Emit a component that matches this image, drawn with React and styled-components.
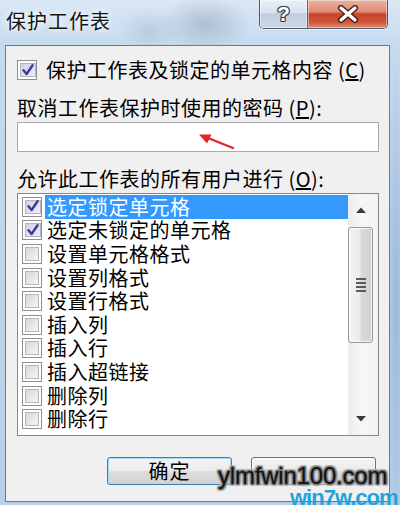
import React from 'react';
import styled, { createGlobalStyle } from 'styled-components';

const Global = createGlobalStyle`
  html, body { margin: 0; padding: 0; background: #fff; }
  body {
    width: 400px; height: 505px; overflow: hidden;
    font-family: "Noto Sans CJK SC", "Noto Sans", sans-serif;
  }
`;

const Window = styled.div`
  position: relative;
  width: 400px;
  height: 505px;
  box-sizing: border-box;
  display: flex;
  flex-direction: column;
  padding: 0 10px 3px 5px;
  overflow: hidden;
  background:
    radial-gradient(ellipse 45px 28px at 205px 24px, rgba(110,122,140,0.32), transparent),
    radial-gradient(ellipse 30px 22px at 150px 30px, rgba(110,122,140,0.18), transparent),
    radial-gradient(ellipse 10px 260px at 396px 300px, rgba(90,130,190,0.35), transparent),
    linear-gradient(180deg, #d9e7f5 0%, #c6daee 9%, #b8cfe8 100%);
`;

const TitleBar = styled.div`
  height: 45px;
  flex: none;
  display: flex;
  justify-content: space-between;
  align-items: flex-start;
`;

const Title = styled.div`
  margin: 9px 0 0 1px;
  font-size: 20px;
  line-height: 24px;
  letter-spacing: 1px;
  color: #151515;
  text-shadow: 0 0 6px #fff, 0 0 10px rgba(255,255,255,0.85);
`;

const Controls = styled.div`
  display: flex;
  margin-right: 2px;
  height: 29px;
  box-sizing: border-box;
  border: 1px solid #4d5d70;
  border-top: none;
  border-radius: 0 0 5px 5px;
  overflow: hidden;
  box-shadow: 0 1px 0 rgba(255,255,255,0.6);
`;

const CtrlButton = styled.div`
  width: ${p => p.$w}px;
  display: flex;
  align-items: center;
  justify-content: center;
  background: ${p => p.$red
    ? 'linear-gradient(180deg, #eab3a3 0%, #de8a72 42%, #c8432b 50%, #cf5339 78%, #e08c6e 100%)'
    : 'linear-gradient(180deg, #e9f0f8 0%, #d6e2ef 45%, #bfcddd 50%, #cbd8e7 100%)'};
  border-right: ${p => p.$red ? 'none' : '1px solid #56667a'};
  box-shadow: inset 0 0 0 1px rgba(255,255,255,0.45);
`;

const HelpGlyph = styled.span`
  font-family: "Liberation Sans", Arial, sans-serif;
  font-weight: bold;
  font-size: 21px;
  line-height: 1;
  color: #fff;
  text-shadow: -1px -1px 0 #3a4656, 1px -1px 0 #3a4656, -1px 1px 0 #3a4656, 1px 1px 0 #3a4656,
    0 -1px 0 #3a4656, 0 1px 0 #3a4656, -1px 0 0 #3a4656, 1px 0 0 #3a4656;
  margin-top: -2px;
`;

const Client = styled.div`
  flex: 1;
  display: flex;
  flex-direction: column;
  background: #f0f0f0;
  border: 1px solid #6a7a8c;
  padding: 12px 10px 0 11px;
  color: #000;
  font-size: 20px;
  letter-spacing: 0.5px;
`;

const CheckRow = styled.label`
  display: flex;
  align-items: center;
  gap: 9px;
  height: 24px;
  line-height: 24px;
`;

const Label = styled.div`
  margin-top: ${p => p.$mt}px;
  height: 24px;
  line-height: 24px;
`;

const Box = styled.span`
  flex: none;
  width: 20px;
  height: 20px;
  box-sizing: border-box;
  border: 1px solid #8e8f8f;
  background: #fff;
  padding: 2px;
  display: flex;
`;

const BoxInner = styled.span`
  flex: 1;
  display: flex;
  align-items: center;
  justify-content: center;
  border: 1px solid #b3b6bc;
  background: ${p => p.$on
    ? 'linear-gradient(135deg, #cfd0e4 0%, #eeeef6 100%)'
    : 'linear-gradient(135deg, #d3d6db 0%, #f6f6f7 100%)'};
`;

const Checkbox = ({ on }) => (
  <Box>
    <BoxInner $on={on}>
      {on && (
        <svg width="14" height="14" viewBox="0 0 14 14" style={{ marginTop: -1 }}>
          <path d="M2.5 7.2 L5.6 11 L11.6 2.2" fill="none" stroke="#3a3a9a" strokeWidth="2.4" strokeLinejoin="round" strokeLinecap="round" />
        </svg>
      )}
    </BoxInner>
  </Box>
);

const PasswordBox = styled.div`
  position: relative;
  margin-top: 2px;
  height: 30px;
  box-sizing: border-box;
  border: 1px solid #a7a9ad;
  background: #fff;
`;

const ArrowSvg = styled.svg`
  position: absolute;
  left: 0;
  top: 0;
`;

const ListBox = styled.div`
  margin-top: 2px;
  height: 243px;
  box-sizing: border-box;
  border: 1px solid #828790;
  background: #fff;
  display: flex;
`;

const Items = styled.div`
  flex: 1;
  padding: 1px 0 0 4px;
  display: flex;
  flex-direction: column;
`;

const Item = styled.div`
  height: 23.6px;
  flex: none;
  display: flex;
  align-items: center;
  gap: 3px;
`;

const ItemText = styled.span`
  flex: 1;
  align-self: stretch;
  display: flex;
  align-items: center;
  padding-left: 2px;
  line-height: 20px;
  background: ${p => p.$sel ? '#3399ff' : 'transparent'};
  color: ${p => p.$sel ? '#fff' : '#000'};
  white-space: nowrap;
`;

const ScrollBar = styled.div`
  width: 30px;
  flex: none;
  display: flex;
  flex-direction: column;
  background: linear-gradient(90deg, #ececec 0%, #f6f6f6 40%, #f3f3f3 100%);
`;

const ScrollArrow = styled.div`
  height: 32px;
  flex: none;
  display: flex;
  align-items: center;
  justify-content: center;
  padding-right: 4px;
`;

const Track = styled.div`
  flex: 1;
`;

const Thumb = styled.div`
  height: 116px;
  flex: none;
  margin: 1px 5px 0 0;
  box-sizing: border-box;
  border: 1px solid #979797;
  border-radius: 3px;
  background: linear-gradient(90deg, #f4f4f4 0%, #ebebeb 45%, #dadada 55%, #d0d0d0 100%);
  box-shadow: inset 0 0 0 1px rgba(255,255,255,0.75);
  display: flex;
  align-items: center;
  justify-content: center;
`;

const Grip = styled.div`
  width: 10px;
  height: 14px;
  background: repeating-linear-gradient(180deg, #5a5a5a 0 2px, transparent 2px 4px);
`;

const ButtonRow = styled.div`
  margin-top: 21px;
  display: flex;
  justify-content: flex-end;
  gap: 19px;
  padding-right: 3px;
`;

const Button = styled.div`
  width: 125px;
  height: 28px;
  box-sizing: border-box;
  border-radius: 3px;
  border: 1px solid ${p => p.$primary ? '#3c7fb1' : '#707070'};
  background: linear-gradient(180deg, #f4f4f4 0%, #ececec 48%, #dedede 52%, #d2d2d2 100%);
  box-shadow: inset 0 0 0 1px ${p => p.$primary ? '#a6dcf3' : 'rgba(255,255,255,0.8)'};
  display: flex;
  align-items: center;
  justify-content: center;
  font-size: 20px;
  line-height: 24px;
  letter-spacing: 1px;
`;

const SiteMark = styled.div`
  position: absolute;
  left: 218px;
  top: 464px;
  font-family: "Liberation Sans", Arial, sans-serif;
  font-size: 24px;
  line-height: 1;
  letter-spacing: -0.2px;
  color: #111;
  text-shadow:
    -1px -1px 0 #7a7a7a, 1px -1px 0 #7a7a7a, -1px 1px 0 #7a7a7a, 1px 1px 0 #7a7a7a,
    0 -2px 0 #a9a9a9, 0 2px 0 #a9a9a9, -2px 0 0 #a9a9a9, 2px 0 0 #a9a9a9,
    -2px -2px 1px #c8c8c8, 2px 2px 1px #c8c8c8, 2px -2px 1px #c8c8c8, -2px 2px 1px #c8c8c8;
`;

const SubMark = styled.div`
  position: absolute;
  left: 290px;
  top: 487px;
  font-family: "Liberation Sans", Arial, sans-serif;
  font-weight: bold;
  font-size: 22px;
  line-height: 1;
  letter-spacing: -1px;
  color: #22a3dc;
`;

const items = [
  { t: '选定锁定单元格', on: true, sel: true },
  { t: '选定未锁定的单元格', on: true },
  { t: '设置单元格格式' },
  { t: '设置列格式' },
  { t: '设置行格式' },
  { t: '插入列' },
  { t: '插入行' },
  { t: '插入超链接' },
  { t: '删除列' },
  { t: '删除行' },
];

export default function App() {
  return (
    <>
      <Global />
      <Window>
        <TitleBar>
          <Title>保护工作表</Title>
          <Controls>
            <CtrlButton $w={47}>
              <HelpGlyph>?</HelpGlyph>
            </CtrlButton>
            <CtrlButton $w={79} $red>
              <svg width="22" height="18" viewBox="0 0 22 18">
                <path d="M4 3 L18 15 M18 3 L4 15" stroke="#4a2018" strokeWidth="6.2" strokeLinecap="round" />
                <path d="M4 3 L18 15 M18 3 L4 15" stroke="#fff" strokeWidth="3.4" strokeLinecap="round" />
              </svg>
            </CtrlButton>
          </Controls>
        </TitleBar>
        <Client>
          <CheckRow>
            <Checkbox on />
            <span>保护工作表及锁定的单元格内容 (<u>C</u>)</span>
          </CheckRow>
          <Label $mt={14}>取消工作表保护时使用的密码 (<u>P</u>):</Label>
          <PasswordBox>
            <ArrowSvg width="360" height="28" viewBox="0 0 360 28">
              <path d="M215 25 L190 15" stroke="#e0262a" strokeWidth="2.4" strokeLinecap="round" />
              <path d="M181 11.5 L193.5 11.5 L189 20.5 Z" fill="#e0262a" />
            </ArrowSvg>
          </PasswordBox>
          <Label $mt={15}>允许此工作表的所有用户进行 (<u>O</u>):</Label>
          <ListBox>
            <Items>
              {items.map((it) => (
                <Item key={it.t}>
                  <Checkbox on={!!it.on} />
                  <ItemText $sel={!!it.sel}>{it.t}</ItemText>
                </Item>
              ))}
            </Items>
            <ScrollBar>
              <ScrollArrow>
                <svg width="10" height="6" viewBox="0 0 10 6"><path d="M0 6 L5 0.5 L10 6 Z" fill="#3a3a3a" /></svg>
              </ScrollArrow>
              <Thumb><Grip /></Thumb>
              <Track />
              <ScrollArrow>
                <svg width="10" height="6" viewBox="0 0 10 6"><path d="M0 0 L5 5.5 L10 0 Z" fill="#3a3a3a" /></svg>
              </ScrollArrow>
            </ScrollBar>
          </ListBox>
          <ButtonRow>
            <Button $primary>确定</Button>
            <Button />
          </ButtonRow>
        </Client>
        <SubMark>win7w.com</SubMark>
        <SiteMark>ylmfwin100.com</SiteMark>
      </Window>
    </>
  );
}
